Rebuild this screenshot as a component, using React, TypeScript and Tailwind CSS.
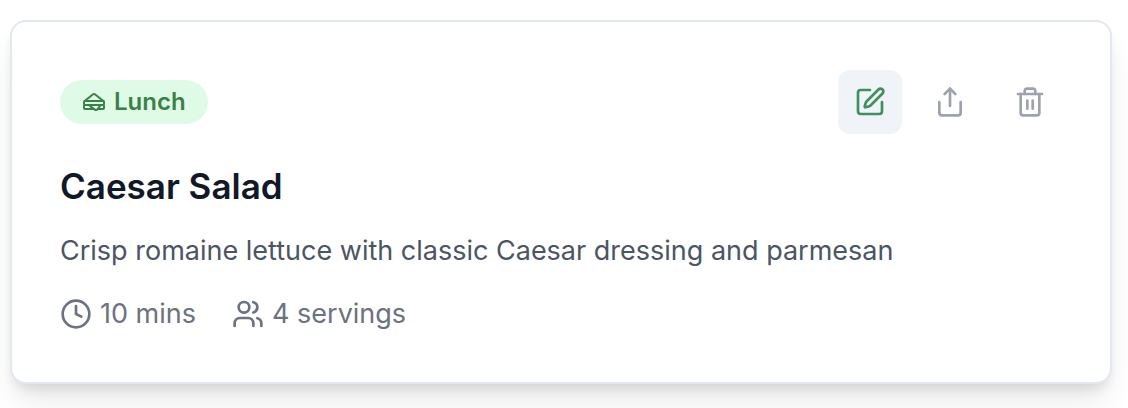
import { Clock, Sandwich, Share, SquarePen, Trash2, Users } from "lucide-react";

const recipe = {
  meal: "Lunch",
  title: "Caesar Salad",
  description: "Crisp romaine lettuce with classic Caesar dressing and parmesan",
  time: "10 mins",
  servings: "4 servings",
};

export default function App() {
  return (
    <main className="bg-white pt-5 pr-4 pb-6 pl-2.5 font-['Inter',sans-serif]">
      <article className="rounded-2xl border-2 border-[#e2e8f0] bg-white p-12 shadow-[0_20px_30px_-6px_rgba(0,0,0,0.1),0_8px_12px_-4px_rgba(0,0,0,0.1)]">
        <header className="flex items-center justify-between">
          <span className="flex h-11 items-center gap-2 rounded-full bg-[#dffbe8] px-[22px] text-2xl font-semibold text-[#398246]">
            <Sandwich size={24} aria-hidden="true" />
            {recipe.meal}
          </span>
          <div className="flex gap-4">
            <button type="button" aria-label="Edit" className="grid size-16 place-items-center rounded-xl bg-[#f0f4f8] text-[#3f8f5f]">
              <SquarePen size={32} />
            </button>
            <button type="button" aria-label="Share" className="grid size-16 place-items-center rounded-xl text-[#9ca3af]">
              <Share size={32} />
            </button>
            <button type="button" aria-label="Delete" className="grid size-16 place-items-center rounded-xl text-[#9ca3af]">
              <Trash2 size={32} />
            </button>
          </div>
        </header>
        <h2 className="mt-6 text-[35px] leading-14 font-semibold text-[#111827]">{recipe.title}</h2>
        <p className="mt-4 text-[27px] leading-[42px] text-[#4b5563]">{recipe.description}</p>
        <div className="mt-[22px] flex gap-9 text-[27px] leading-10 text-[#6b7280]">
          <span className="flex items-center gap-2">
            <Clock size={32} aria-hidden="true" />
            {recipe.time}
          </span>
          <span className="flex items-center gap-2">
            <Users size={32} aria-hidden="true" />
            {recipe.servings}
          </span>
        </div>
      </article>
    </main>
  );
}
